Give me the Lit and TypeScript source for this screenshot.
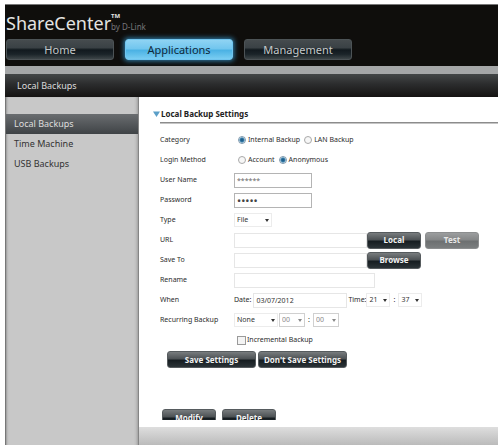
import { LitElement, html, css } from "lit";
import { customElement, state } from "lit/decorators.js";

@customElement("app-root")
export class AppRoot extends LitElement {
  @state() private tab = "Applications";
  @state() private page = "Local Backups";

  static styles = css`
    :host {
      display: block;
      background: #fff;
      font-family: "Noto Sans", "Open Sans", sans-serif;
      font-size: 7px;
      line-height: 10px;
      color: #2c2c2c;
    }
    * {
      box-sizing: border-box;
    }
    .frame {
      display: flex;
      flex-direction: column;
      min-height: 100vh;
      padding: 4px 0 0 5px;
    }
    header {
      height: 62px;
      background: #0f0e0c;
      border-top: 1px solid #777;
      padding-top: 4px;
    }
    .brand {
      display: flex;
      align-items: baseline;
      height: 30px;
      padding-left: 1px;
      color: #e4e4e2;
      font-size: 18px;
      line-height: 28px;
    }
    .tm {
      align-self: flex-start;
      font-size: 6px;
      font-weight: 700;
      line-height: 14px;
      width: 0;
    }
    .by {
      font-size: 8px;
      color: #77767a;
    }
    nav.tabs {
      display: flex;
      gap: 11px;
      padding-left: 1px;
    }
    button {
      font-family: inherit;
      margin: 0;
      padding: 0;
      white-space: nowrap;
    }
    .tab {
      width: 108px;
      height: 21px;
      border: 1px solid #4c5356;
      border-radius: 3px;
      background: linear-gradient(#454b4e, #3a4145 40%, #11191e 52%, #1b2429 75%, #3d4548);
      color: #c4c8c9;
      font-size: 11px;
      line-height: 18px;
    }
    .tab.on {
      border-color: #6fc4ee;
      background: linear-gradient(#8fd3f3, #72c6ee 45%, #4bb2e4 55%, #79cdf2);
      box-shadow: 0 0 5px 1px #2f7fae;
      color: #10293a;
    }
    .crumb {
      border-top: 8px solid #a5a7a8;
      height: 31px;
      padding-left: 12px;
      background: linear-gradient(#444748, #2b2c2d 45%, #151312);
      color: #dcdcdc;
      font-size: 9px;
      line-height: 24px;
    }
    .body {
      display: flex;
      flex: 1;
    }
    aside {
      width: 134px;
      flex: none;
      padding-top: 17px;
      background: #c8c8c8;
      border-left: 1px solid #777;
      border-right: 1px solid #858585;
      box-shadow: inset -3px 0 3px -2px #999, inset 2px 0 2px -1px #999;
    }
    .item {
      display: block;
      height: 20px;
      padding-left: 8px;
      color: #333;
      text-decoration: none;
      font-size: 9px;
      line-height: 20px;
    }
    .item.on {
      background: linear-gradient(#6a6d70, #3f4346);
      color: #dedede;
    }
    main {
      flex: 1;
      min-width: 0;
      display: flex;
      flex-direction: column;
    }
    .panel {
      flex: 1;
      padding: 10px 0 0 14px;
    }
    h1 {
      display: flex;
      align-items: center;
      gap: 1px;
      margin: 0;
      height: 14px;
      font-size: 8px;
      line-height: 14px;
      color: #222;
    }
    h1 svg {
      flex: none;
    }
    .rule {
      height: 2px;
      margin: 1px 0 6px 7px;
      background: #8c8c8c;
      border-bottom: 1px solid #c4c4c4;
    }
    .row {
      display: grid;
      grid-template-columns: 74px 1fr;
      align-items: center;
      height: 20px;
      padding-left: 7px;
    }
    .set {
      display: flex;
      align-items: center;
      min-width: 0;
    }
    .opt {
      display: flex;
      align-items: center;
      gap: 2px;
      padding-left: 4px;
    }
    input[type="radio"] {
      appearance: none;
      margin: 0;
      width: 8px;
      height: 8px;
      border: 1px solid #a9a9a9;
      border-radius: 50%;
      background: #f7f7f7;
    }
    input[type="radio"]:checked {
      border-color: #7f99ad;
      background: radial-gradient(#1d5f8c 30%, #5b9cc4 55%, #dbe8f0 70%);
    }
    input[type="checkbox"] {
      appearance: none;
      margin: 0;
      width: 9px;
      height: 9px;
      border: 1px solid #9a9a9a;
      background: #f4f4f4;
    }
    .opt.tick {
      gap: 1px;
      padding-left: 3px;
    }
    .field {
      font: inherit;
      color: #333;
      height: 15px;
      padding: 0 2px;
      border: 1px solid #e6e6e6;
      background: #fff;
      min-width: 0;
      border-radius: 0;
    }
    .field.boxed {
      width: 78px;
      border-color: #b4b4b4;
      color: #666;
    }
    .field[type="password"] {
      font-size: 11px;
      color: #444;
    }
    .path {
      width: 133px;
    }
    .name {
      width: 141px;
    }
    .date {
      width: 94px;
      margin: 0 1px 0 2px;
    }
    .drop {
      position: relative;
      display: flex;
      width: 24px;
    }
    .drop::after {
      content: "";
      position: absolute;
      right: 3px;
      top: 6px;
      border: 2px solid transparent;
      border-top: 3px solid #333;
      border-bottom: 0;
      pointer-events: none;
    }
    .drop select {
      appearance: none;
      font: inherit;
      color: #333;
      width: 100%;
      height: 14px;
      padding: 0 2px;
      border: 1px solid #ececec;
      border-radius: 0;
      background: #fff;
      opacity: 1;
    }
    .drop.w38 {
      width: 38px;
    }
    .drop.w44 {
      width: 44px;
      margin-right: 1px;
    }
    .drop.off {
      width: 26px;
    }
    .drop.off select {
      border-color: #d0d0d0;
      color: #888;
    }
    .drop.off::after {
      border-top-color: #888;
    }
    .colon {
      width: 8px;
      text-align: center;
    }
    .btn {
      flex: none;
      width: 54px;
      height: 17px;
      border: 1px solid #565b5e;
      border-radius: 3px;
      background: linear-gradient(#787c7e, #4d5255 45%, #161d21 55%, #2b3337);
      color: #f2f2f2;
      font-size: 8px;
      font-weight: 700;
      line-height: 14px;
    }
    .btn.dim {
      margin-left: 4px;
      border-color: #8c8e8f;
      background: linear-gradient(#9c9e9f, #858788 45%, #6d7071 55%, #7b7e7f);
      color: #e8e8e8;
    }
    .save {
      display: flex;
      gap: 2px;
      padding: 1px 0 0 14px;
    }
    .save .btn {
      width: 89px;
    }
    .list {
      display: flex;
      gap: 6px;
      height: 11px;
      margin: 41px 0 7px 9px;
      overflow: hidden;
    }
    .base {
      height: 19px;
      background: linear-gradient(#dedede, #b9b9b9);
    }
  `;

  private drop(label: string, value: string, kind = "", off = false) {
    return html`<span class="drop ${kind}">
      <select aria-label=${label} ?disabled=${off}><option>${value}</option></select>
    </span>`;
  }

  render() {
    return html`<div class="frame">
      <header>
        <div class="brand">
          <span>ShareCenter</span><span class="tm">TM</span><span class="by">by D-Link</span>
        </div>
        <nav class="tabs">
          ${["Home", "Applications", "Management"].map(
            (t) => html`<button class="tab ${t === this.tab ? "on" : ""}" @click=${() => (this.tab = t)}>${t}</button>`
          )}
        </nav>
      </header>
      <div class="crumb">Local Backups</div>
      <div class="body">
        <aside>
          ${["Local Backups", "Time Machine", "USB Backups"].map(
            (p) => html`<a class="item ${p === this.page ? "on" : ""}" href="#" @click=${() => (this.page = p)}>${p}</a>`
          )}
        </aside>
        <main>
          <div class="panel">
            <h1>
              <svg width="7" height="6" viewBox="0 0 7 6"><path d="M0 .5h7L3.500 6z" fill="#5b9fc8" /></svg>
              Local Backup Settings
            </h1>
            <div class="rule"></div>
            <div class="row">
              <span>Category</span>
              <div class="set">
                <label class="opt"><input type="radio" name="cat" checked />Internal Backup</label>
                <label class="opt"><input type="radio" name="cat" />LAN Backup</label>
              </div>
            </div>
            <div class="row">
              <span>Login Method</span>
              <div class="set">
                <label class="opt"><input type="radio" name="login" />Account</label>
                <label class="opt"><input type="radio" name="login" checked />Anonymous</label>
              </div>
            </div>
            <div class="row">
              <label for="user">User Name</label>
              <div class="set"><input id="user" class="field boxed" value="******" /></div>
            </div>
            <div class="row">
              <label for="pass">Password</label>
              <div class="set"><input id="pass" class="field boxed" type="password" value="admin" /></div>
            </div>
            <div class="row">
              <span>Type</span>
              <div class="set">${this.drop("Type", "File", "w38")}</div>
            </div>
            <div class="row">
              <label for="url">URL</label>
              <div class="set">
                <input id="url" class="field path" />
                <button class="btn">Local</button>
                <button class="btn dim">Test</button>
              </div>
            </div>
            <div class="row">
              <label for="dest">Save To</label>
              <div class="set">
                <input id="dest" class="field path" />
                <button class="btn">Browse</button>
              </div>
            </div>
            <div class="row">
              <label for="rename">Rename</label>
              <div class="set"><input id="rename" class="field name" /></div>
            </div>
            <div class="row">
              <span>When</span>
              <div class="set">
                <label for="date">Date:</label>
                <input id="date" class="field date" value="03/07/2012" />
                <span>Time:</span>
                ${this.drop("Hour", "21")}<span class="colon">:</span>${this.drop("Minute", "37")}
              </div>
            </div>
            <div class="row">
              <span>Recurring Backup</span>
              <div class="set">
                ${this.drop("Recurrence", "None", "w44")}${this.drop("Recurring hour", "00", "off", true)}<span
                  class="colon"
                  >:</span
                >${this.drop("Recurring minute", "00", "off", true)}
              </div>
            </div>
            <div class="row">
              <span></span>
              <label class="opt tick"><input type="checkbox" />Incremental Backup</label>
            </div>
            <div class="save">
              <button class="btn">Save Settings</button>
              <button class="btn">Don't Save Settings</button>
            </div>
            <div class="list">
              <button class="btn">Modify</button>
              <button class="btn">Delete</button>
            </div>
          </div>
          <div class="base"></div>
        </main>
      </div>
    </div>`;
  }
}
